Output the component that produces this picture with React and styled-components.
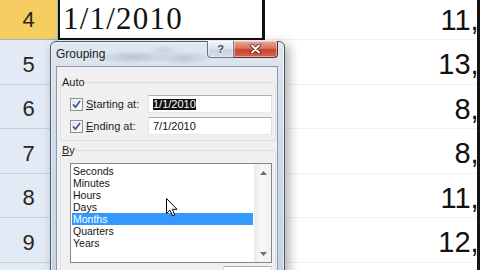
import React from 'react';
import styled, { createGlobalStyle } from 'styled-components';

const GlobalStyle = createGlobalStyle`
  html, body {
    margin: 0;
    padding: 0;
    background: #fff;
    overflow: hidden;
  }
  * {
    box-sizing: border-box;
  }
`;

const UI = `"Liberation Sans", Arial, sans-serif`;

const Page = styled.div`
  position: relative;
  width: 480px;
  height: 270px;
  overflow: hidden;
  background: #fff;
  font-family: ${UI};
`;

const Sheet = styled.div`
  display: grid;
  grid-template-columns: 58px 207px 212px 3px;
  grid-auto-rows: 44.5px;
  margin-top: -4.5px;
`;

const RowHeader = styled.div`
  display: flex;
  align-items: center;
  justify-content: center;
  padding-top: 6px;
  font-size: 22px;
  color: #262626;
  background: ${p => (p.$selected ? '#f5cd60' : '#e2eaf6')};
  border-bottom: 1px solid ${p => (p.$selected ? '#9eb0c4' : '#c3d0df')};
  border-right: 1px solid #9fb3c8;
`;

const DateCell = styled.div`
  display: flex;
  align-items: center;
  padding: 5px 0 0 5px;
  font-family: "Liberation Serif", "Times New Roman", serif;
  font-size: 31px;
  letter-spacing: 1.2px;
  color: #111;
  background: #fff;
  border-bottom: 1px solid #e4e4e4;
  ${p =>
    p.$selected &&
    `
    border: 2px solid #111;
    border-top: none;
    border-right-width: 3px;
    padding-left: 3px;
  `}
`;

const ValueCell = styled.div`
  display: flex;
  align-items: center;
  justify-content: flex-end;
  overflow: hidden;
  padding-top: 6px;
  font-size: 29px;
  color: #111;
  border-bottom: 1px solid #f2f2f2;
`;

const Value = styled.span`
  margin-right: -50px;
  white-space: nowrap;
`;

const EdgeBar = styled.div`
  background: #141414;
`;

const Dialog = styled.div`
  position: absolute;
  left: 50px;
  top: 41px;
  width: 235px;
  height: 245px;
  display: flex;
  flex-direction: column;
  padding: 0 6px 0 5px;
  border: 1px solid #4b5a6b;
  border-radius: 6px 6px 0 0;
  background: linear-gradient(180deg, #dfe7f0 0%, #cfdbe8 40%, #c5d3e3 100%);
  box-shadow: 4px 3px 12px rgba(0, 0, 0, 0.32), inset 0 0 0 1px rgba(255, 255, 255, 0.55);
`;

const TitleBar = styled.div`
  height: 24px;
  flex: none;
  display: flex;
  align-items: flex-start;
  background:
    radial-gradient(ellipse 38px 7px at 78px 15px, rgba(110, 125, 140, 0.32), transparent),
    radial-gradient(ellipse 30px 7px at 128px 16px, rgba(110, 125, 140, 0.28), transparent),
    radial-gradient(ellipse 16px 6px at 108px 8px, rgba(110, 125, 140, 0.18), transparent);
`;

const Title = styled.span`
  flex: 1;
  margin-top: 6px;
  font-size: 12px;
  line-height: 13px;
  color: #1c1c1c;
`;

const CaptionButton = styled.div`
  height: 17px;
  margin-top: -1px;
  display: flex;
  align-items: center;
  justify-content: center;
  border: 1px solid ${p => (p.$close ? '#5e2a22' : '#6a7889')};
  border-top: none;
  width: ${p => (p.$close ? '44px' : '27px')};
  border-radius: ${p => (p.$close ? '0 0 4px 0' : '0 0 0 4px')};
  border-left-width: ${p => (p.$close ? '0' : '1px')};
  background: ${p =>
    p.$close
      ? 'linear-gradient(180deg, #e9a897 0%, #d7765f 45%, #c4452d 55%, #d3674c 100%)'
      : 'linear-gradient(180deg, #f3f6fa 0%, #dfe6ee 45%, #c9d3de 55%, #d6dee8 100%)'};
  box-shadow: inset 0 0 0 1px rgba(255, 255, 255, 0.45);
`;

const HelpGlyph = styled.span`
  font-size: 11px;
  font-weight: bold;
  color: #3a4859;
  text-shadow: 0 1px 0 #fff;
  line-height: 11px;
`;

const Client = styled.div`
  flex: 1;
  display: flex;
  flex-direction: column;
  padding: 0 1px 0 3px;
  background: #f0f0f0;
  border: 1px solid #8e9aa8;
`;

const Group = styled.fieldset`
  margin: ${p => p.$top}px 0 0 0;
  padding: 0 3px 5px 0;
  border: 1px solid #d5dfe5;
  border-radius: 3px;
  min-width: 0;
`;

const Legend = styled.legend`
  padding: 0 1px;
  margin-left: 0;
  font-size: 11px;
  line-height: 13px;
  color: #1e1e1e;
`;

const FieldRow = styled.div`
  display: flex;
  align-items: center;
  height: 18px;
  margin-top: ${p => p.$gap}px;
  padding-left: 9px;
`;

const CheckBox = styled.span`
  width: 13px;
  height: 13px;
  flex: none;
  margin-right: 3px;
  display: flex;
  align-items: center;
  justify-content: center;
  border: 1px solid #8f8f8f;
  background: linear-gradient(135deg, #dcdcdc 0%, #f7f7f7 60%, #ffffff 100%);
  box-shadow: inset 0 0 0 1px #f4f4f4;
`;

const FieldLabel = styled.span`
  width: 62px;
  flex: none;
  font-size: 11px;
  color: #1e1e1e;
  white-space: nowrap;
  u {
    text-decoration: underline;
  }
`;

const TextBox = styled.div`
  flex: ${p => (p.$width ? 'none' : '1')};
  width: ${p => (p.$width ? `${p.$width}px` : 'auto')};
  height: 18px;
  display: flex;
  align-items: center;
  padding-left: 4px;
  font-size: 11px;
  color: #111;
  background: #fff;
  border: 1px solid;
  border-color: #abadb3 #dbdfe6 #e3e9ef #e2e3ea;
`;

const Selected = styled.span`
  background: #111;
  color: #fff;
  line-height: 11px;
`;

const ListBox = styled.div`
  height: 100px;
  margin: 6px 0 0 9px;
  display: flex;
  border: 1px solid #828790;
  background: #fff;
`;

const Items = styled.div`
  flex: 1;
  padding: 1px 1px 0 1px;
`;

const Item = styled.div`
  height: 12px;
  line-height: 12px;
  padding-left: 1px;
  font-size: 10.5px;
  color: ${p => (p.$active ? '#fff' : '#141414')};
  background: ${p => (p.$active ? '#3399ff' : 'transparent')};
`;

const ScrollBar = styled.div`
  width: 17px;
  flex: none;
  display: flex;
  flex-direction: column;
  justify-content: space-between;
  background: linear-gradient(90deg, #ececec, #f7f7f7 40%, #f0f0f0);
  border-left: 1px solid #ebebeb;
`;

const ScrollButton = styled.div`
  height: 17px;
  display: flex;
  align-items: center;
  justify-content: center;
`;

const BottomRow = styled.div`
  display: flex;
  align-items: flex-start;
  justify-content: space-between;
  margin-top: 3px;
  padding-left: 9px;
`;

const DimLabel = styled.span`
  padding-top: 4px;
  font-size: 11px;
  color: #8d8d8d;
`;

const Pointer = styled.svg`
  position: absolute;
  left: 166px;
  top: 198px;
  width: 12px;
  height: 19px;
`;

const rows = [
  { n: 4, date: '1/1/2010', value: '11,250', selected: true },
  { n: 5, date: '2/1/2010', value: '13,480' },
  { n: 6, date: '3/1/2010', value: '8,315' },
  { n: 7, date: '4/1/2010', value: '8,902' },
  { n: 8, date: '5/1/2010', value: '11,064' },
  { n: 9, date: '6/1/2010', value: '12,377' },
  { n: 10, date: '7/1/2010', value: '10,518' },
];

const units = ['Seconds', 'Minutes', 'Hours', 'Days', 'Months', 'Quarters', 'Years'];

const Check = () => (
  <svg width="9" height="9" viewBox="0 0 9 9">
    <path d="M1 4.5 L3.5 7.2 L8 1" fill="none" stroke="#3c5a9a" strokeWidth="1.8" />
  </svg>
);

const Arrow = ({ down }) => (
  <svg width="7" height="4" viewBox="0 0 7 4">
    <path d={down ? 'M0 0 L7 0 L3.5 4 Z' : 'M0 4 L7 4 L3.5 0 Z'} fill="#6e6e6e" />
  </svg>
);

export default function App() {
  return (
    <>
      <GlobalStyle />
      <Page>
        <Sheet>
          {rows.map(r => (
            <React.Fragment key={r.n}>
              <RowHeader $selected={r.selected}>{r.n}</RowHeader>
              <DateCell $selected={r.selected}>{r.date}</DateCell>
              <ValueCell>
                <Value>{r.value}</Value>
              </ValueCell>
              <EdgeBar />
            </React.Fragment>
          ))}
        </Sheet>

        <Dialog>
          <TitleBar>
            <Title>Grouping</Title>
            <CaptionButton>
              <HelpGlyph>?</HelpGlyph>
            </CaptionButton>
            <CaptionButton $close>
              <svg width="11" height="10" viewBox="0 0 11 10">
                <path d="M2 1.5 L9 8.5 M9 1.5 L2 8.5" stroke="#5a1d14" strokeWidth="3.6" strokeLinecap="round" />
                <path d="M2 1.5 L9 8.5 M9 1.5 L2 8.5" stroke="#fff" strokeWidth="2" strokeLinecap="round" />
              </svg>
            </CaptionButton>
          </TitleBar>

          <Client>
            <Group $top={9}>
              <Legend>Auto</Legend>
              <FieldRow $gap={6}>
                <CheckBox>
                  <Check />
                </CheckBox>
                <FieldLabel>
                  <u>S</u>tarting at:
                </FieldLabel>
                <TextBox>
                  <Selected>1/1/2010</Selected>
                </TextBox>
              </FieldRow>
              <FieldRow $gap={4}>
                <CheckBox>
                  <Check />
                </CheckBox>
                <FieldLabel>
                  <u>E</u>nding at:
                </FieldLabel>
                <TextBox>7/1/2010</TextBox>
              </FieldRow>
            </Group>

            <Group $top={3}>
              <Legend>
                <u>B</u>y
              </Legend>
              <ListBox>
                <Items>
                  {units.map(u => (
                    <Item key={u} $active={u === 'Months'}>
                      {u}
                    </Item>
                  ))}
                </Items>
                <ScrollBar>
                  <ScrollButton>
                    <Arrow />
                  </ScrollButton>
                  <ScrollButton>
                    <Arrow down />
                  </ScrollButton>
                </ScrollBar>
              </ListBox>
              <BottomRow>
                <DimLabel>Number of days:</DimLabel>
                <TextBox $width={49}>1</TextBox>
              </BottomRow>
            </Group>
          </Client>
        </Dialog>

        <Pointer viewBox="0 0 12 19">
          <path d="M0.5 0.5 L0.5 15.5 L4 12.2 L6.6 18 L8.8 17 L6.3 11.3 L11 11.3 Z" fill="#fff" stroke="#000" strokeWidth="1" strokeLinejoin="round" />
        </Pointer>
      </Page>
    </>
  );
}
